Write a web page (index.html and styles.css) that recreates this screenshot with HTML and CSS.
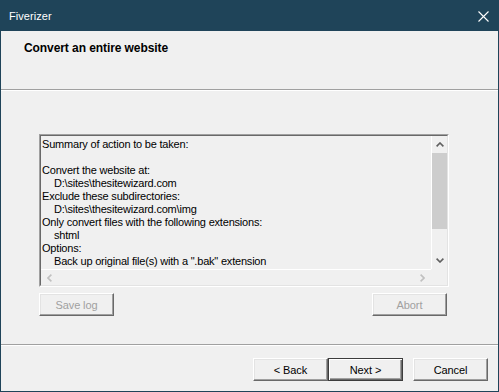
FILE: index.html
```html
<!DOCTYPE html>
<html lang="en">
	<head>
		<meta charset="UTF-8" />
		<meta name="viewport" content="width=device-width, initial-scale=1.0" />
		<title>Fiverizer</title>
		<link rel="stylesheet" href="styles.css">
	</head>
	<body>
		<div class="window">
			<div class="titlebar">
				<span class="title">Fiverizer</span>
				<svg class="close-icon" viewBox="0 0 11 11" fill="none" stroke="#ffffff" stroke-width="1.1">
					<path d="M0.5 0.5 L10.5 10.5 M10.5 0.5 L0.5 10.5" />
				</svg>
			</div>

			<div class="header">
				<h1>Convert an entire website</h1>
			</div>

			<div class="content">
				<div class="log">
					<div class="log-inner">
						<div class="log-text">
							<div>Summary of action to be taken:</div>
							<div>&nbsp;</div>
							<div>Convert the website at:</div>
							<div class="indent">D:\sites\thesitewizard.com</div>
							<div>Exclude these subdirectories:</div>
							<div class="indent">D:\sites\thesitewizard.com\img</div>
							<div>Only convert files with the following extensions:</div>
							<div class="indent">shtml</div>
							<div>Options:</div>
							<div class="indent">Back up original file(s) with a ".bak" extension</div>
						</div>
						<div class="vscroll">
							<div class="arrow">
								<svg viewBox="0 0 8 5" fill="none" stroke="#606060" stroke-width="1.6">
									<path d="M0.6 4.4 L4 1 L7.4 4.4" />
								</svg>
							</div>
							<div class="thumb"></div>
							<div class="track"></div>
							<div class="arrow">
								<svg viewBox="0 0 8 5" fill="none" stroke="#606060" stroke-width="1.6">
									<path d="M0.6 0.6 L4 4 L7.4 0.6" />
								</svg>
							</div>
						</div>
						<div class="hscroll">
							<div class="arrow">
								<svg viewBox="0 0 5 8" fill="none" stroke="#c0c0c0" stroke-width="1.6">
									<path d="M4.4 0.6 L1 4 L4.4 7.4" />
								</svg>
							</div>
							<div class="arrow">
								<svg viewBox="0 0 5 8" fill="none" stroke="#c0c0c0" stroke-width="1.6">
									<path d="M0.6 0.6 L4 4 L0.6 7.4" />
								</svg>
							</div>
						</div>
						<div class="corner"></div>
					</div>
				</div>

				<div class="log-actions">
					<button class="btn" disabled>Save log</button>
					<button class="btn btn-abort" disabled>Abort</button>
				</div>
			</div>

			<div class="footer">
				<button class="btn">&lt; Back</button>
				<button class="btn btn-default">Next &gt;</button>
				<button class="btn btn-cancel">Cancel</button>
			</div>
		</div>
	</body>
</html>
```

FILE: styles.css
```css
:root {
	--frame: #1f4459;
	--face: #f0f0f0;
	--shadow: #a0a0a0;
	--dark-shadow: #696969;
	--light: #e3e3e3;
	--highlight: #ffffff;
}
* {
	box-sizing: border-box;
}
body {
	margin: 0;
	font-family: 'Liberation Sans', Arial, sans-serif;
	font-size: 11px;
	color: #000;
	background-color: var(--face);
}
.window {
	display: flex;
	flex-direction: column;
	width: 499px;
	height: 392px;
	border: 1px solid var(--frame);
	border-top: none;
	background-color: var(--face);
}
.titlebar {
	display: flex;
	flex-shrink: 0;
	align-items: center;
	justify-content: space-between;
	height: 31px;
	margin: 0 -1px;
	padding: 1px 10px 0 9px;
	background-color: var(--frame);
	color: #fff;
}
.title {
	font-size: 11px;
	letter-spacing: 0.05px;
}
.close-icon {
	width: 11px;
	height: 11px;
}
.header {
	flex-shrink: 0;
	height: 59px;
	padding: 10px 23px 0;
	border-bottom: 1px solid var(--shadow);
	box-shadow: 0 1px 0 var(--highlight);
}
h1 {
	margin: 0;
	font-size: 12px;
	line-height: 14px;
	font-weight: 700;
	letter-spacing: -0.08px;
}
.content {
	flex: 1;
	padding: 44px 0 0 38px;
	border-bottom: 1px solid var(--shadow);
	box-shadow: 0 1px 0 var(--highlight);
}
.log {
	width: 410px;
	height: 153px;
	border: 1px solid;
	border-color: var(--shadow) var(--highlight) var(--highlight) var(--shadow);
}
.log-inner {
	display: grid;
	grid-template-columns: 1fr 16px;
	grid-template-rows: 1fr 16px;
	height: 100%;
	border: 1px solid;
	border-color: var(--dark-shadow) var(--light) var(--light) var(--dark-shadow);
}
.log-text {
	overflow: hidden;
	padding: 2px 0 0 1px;
	line-height: 13px;
	letter-spacing: -0.2px;
	white-space: nowrap;
}
.indent {
	padding-left: 12px;
}
.vscroll {
	display: flex;
	flex-direction: column;
	border-left: 1px solid var(--highlight);
}
.vscroll .arrow {
	display: flex;
	align-items: center;
	justify-content: center;
	height: 17px;
}
.vscroll .arrow svg {
	width: 8px;
	height: 5px;
}
.thumb {
	height: 76px;
	background-color: #cdcdcd;
}
.track {
	flex: 1;
}
.hscroll {
	display: flex;
	justify-content: space-between;
	border-top: 1px solid var(--highlight);
}
.hscroll .arrow {
	display: flex;
	align-items: center;
	justify-content: center;
	width: 17px;
}
.hscroll .arrow svg {
	width: 5px;
	height: 8px;
}
.corner {
	background-color: var(--face);
}
.log-actions {
	display: flex;
	justify-content: space-between;
	width: 408px;
	margin-top: 6px;
}
.btn {
	width: 75px;
	height: 23px;
	padding: 0;
	font-family: 'Liberation Sans', Arial, sans-serif;
	font-size: 11px;
	letter-spacing: -0.1px;
	color: #000;
	background-color: var(--face);
	border: 1px solid;
	border-color: var(--highlight) var(--dark-shadow) var(--dark-shadow) var(--highlight);
	box-shadow: inset -1px -1px 0 var(--shadow), inset 1px 1px 0 var(--light);
}
.btn:disabled {
	color: var(--shadow);
}
.footer {
	display: flex;
	flex-shrink: 0;
	justify-content: flex-end;
	height: 46px;
	padding: 13px 10px 0 0;
}
.btn-default {
	border-color: #3c3c3c;
	box-shadow: inset 1px 1px 0 var(--highlight), inset -1px -1px 0 var(--dark-shadow), inset -2px -2px 0 var(--shadow);
}
.btn-cancel {
	margin-left: 10px;
}
```
